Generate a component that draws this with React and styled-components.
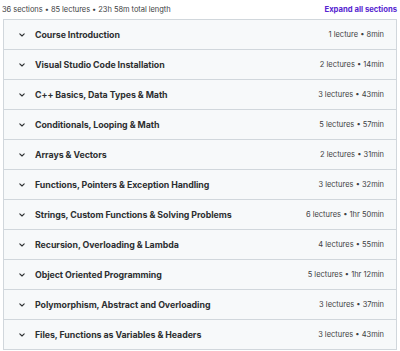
import React from "react";
import styled, { createGlobalStyle } from "styled-components";

const Global = createGlobalStyle`
  html, body { margin: 0; padding: 0; background: #fff; }
  body { font-family: Inter, "Noto Sans", sans-serif; color: #2d2f31; }
`;

const Page = styled.div`
  width: 400px;
  padding: 2px 3px 0 2px;
  box-sizing: border-box;
`;

const Header = styled.div`
  display: flex;
  justify-content: space-between;
  align-items: center;
  height: 14px;
  margin-bottom: 3px;
`;

const Summary = styled.span`
  font-size: 7.5px;
  color: #3e4143;
  letter-spacing: -0.05px;
`;

const Expand = styled.span`
  font-size: 7.7px;
  font-weight: 700;
  color: #5624d0;
`;

const Panel = styled.div`
  margin-left: 1px;
  border: 1px solid #d1d7dc;
  border-bottom: none;
`;

const Row = styled.div`
  display: flex;
  align-items: center;
  height: 29px;
  padding: 0 12px 0 14px;
  background: #f7f9fa;
  border-bottom: 1px solid #d1d7dc;
`;

const Chevron = styled.svg`
  width: 8px;
  height: 8px;
  margin-right: 9px;
  flex-shrink: 0;
`;

const Title = styled.span`
  flex: 1;
  font-size: 8.8px;
  font-weight: 700;
  color: #2d2f31;
  letter-spacing: -0.05px;
`;

const Meta = styled.span`
  font-size: 7.5px;
  color: #3e4143;
`;

const sections = [
  ["Course Introduction", "1 lecture • 8min"],
  ["Visual Studio Code Installation", "2 lectures • 14min"],
  ["C++ Basics, Data Types & Math", "3 lectures • 43min"],
  ["Conditionals, Looping & Math", "5 lectures • 57min"],
  ["Arrays & Vectors", "2 lectures • 31min"],
  ["Functions, Pointers & Exception Handling", "3 lectures • 32min"],
  ["Strings, Custom Functions & Solving Problems", "6 lectures • 1hr 50min"],
  ["Recursion, Overloading & Lambda", "4 lectures • 55min"],
  ["Object Oriented Programming", "5 lectures • 1hr 12min"],
  ["Polymorphism, Abstract and Overloading", "3 lectures • 37min"],
  ["Files, Functions as Variables & Headers", "3 lectures • 43min"],
];

export default function App() {
  return (
    <Page>
      <Global />
      <Header>
        <Summary>36 sections • 85 lectures • 23h 58m total length</Summary>
        <Expand>Expand all sections</Expand>
      </Header>
      <Panel>
        {sections.map(([t, m]) => (
          <Row key={t}>
            <Chevron viewBox="0 0 8 8">
              <path d="M1.8 2.8 L4 5 L6.2 2.8" fill="none" stroke="#2d2f31" strokeWidth="1.1" strokeLinecap="round" strokeLinejoin="round" />
            </Chevron>
            <Title>{t}</Title>
            <Meta>{m}</Meta>
          </Row>
        ))}
      </Panel>
    </Page>
  );
}
